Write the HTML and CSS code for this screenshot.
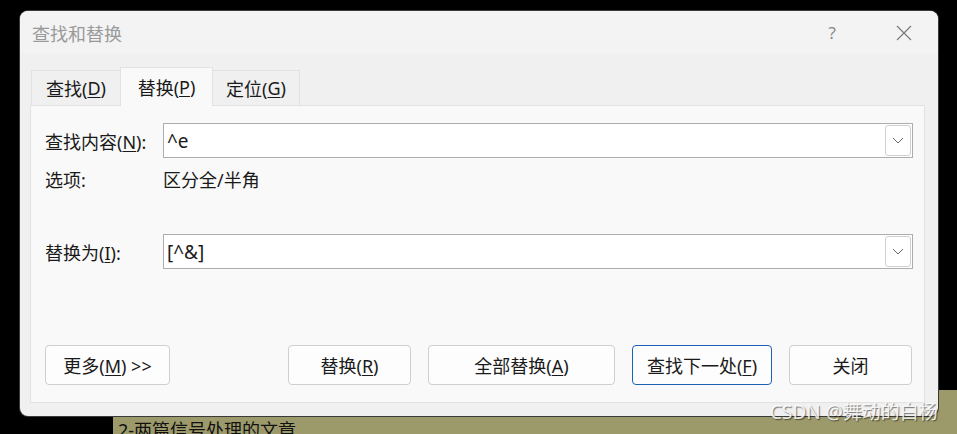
FILE: index.html
```html
<!DOCTYPE html>
<html>
<head>
    <title>查找和替换</title>
    <link rel="stylesheet" href="styles.css">
</head>
<body>
    <div class="doc">
        <p class="doc-line">2-两篇信号处理的文章</p>
    </div>

    <div class="dialog">
        <div class="title-bar">
            <span class="title">查找和替换</span>
            <span class="help">?</span>
            <svg class="close" width="16" height="16" viewBox="0 0 16 16">
                <path d="M1 1 L15 15 M15 1 L1 15" stroke="#7a7a7a" stroke-width="1.2" fill="none"/>
            </svg>
        </div>

        <div class="dialog-body">
            <div class="tabs">
                <div class="tab tab-find">查找(<u>D</u>)</div>
                <div class="tab tab-replace active">替换(<u>P</u>)</div>
                <div class="tab tab-goto">定位(<u>G</u>)</div>
            </div>

            <div class="panel">
                <div class="row">
                    <label class="label">查找内容(<u>N</u>):</label>
                    <div class="combo">
                        <span class="combo-text">^e</span>
                        <span class="combo-btn">
                            <svg width="12" height="7" viewBox="0 0 12 7">
                                <path d="M1 1 L6 6 L11 1" stroke="#6a6a6a" stroke-width="1" fill="none"/>
                            </svg>
                        </span>
                    </div>
                </div>

                <div class="row options">
                    <span class="label">选项:</span>
                    <span class="option-value">区分全/半角</span>
                </div>

                <div class="row replace-row">
                    <label class="label">替换为(<u>I</u>):</label>
                    <div class="combo">
                        <span class="combo-text">[^&amp;]</span>
                        <span class="combo-btn">
                            <svg width="12" height="7" viewBox="0 0 12 7">
                                <path d="M1 1 L6 6 L11 1" stroke="#6a6a6a" stroke-width="1" fill="none"/>
                            </svg>
                        </span>
                    </div>
                </div>

                <div class="buttons">
                    <button class="btn btn-more">更多(<u>M</u>) &gt;&gt;</button>
                    <div class="spacer"></div>
                    <button class="btn btn-replace">替换(<u>R</u>)</button>
                    <button class="btn btn-all">全部替换(<u>A</u>)</button>
                    <button class="btn btn-next default">查找下一处(<u>F</u>)</button>
                    <button class="btn btn-close">关闭</button>
                </div>
            </div>
        </div>
    </div>

    <div class="watermark">CSDN @舞动的白杨</div>
</body>
</html>
```

FILE: styles.css
```css
body {
    margin: 0;
    width: 957px;
    height: 434px;
    overflow: hidden;
    position: relative;
    background-color: #000;
    font-family: "Noto Sans", "Noto Sans CJK SC", sans-serif;
    font-size: 18px;
    color: #1a1a1a;
}

u {
    text-decoration: underline;
    text-underline-offset: 2px;
}

/* document behind the dialog */
.doc {
    position: absolute;
    left: 113px;
    top: 390px;
    right: 0;
    bottom: 0;
    background-color: #9c9a6b;
}

.doc-line {
    margin: 0;
    position: absolute;
    left: 5px;
    top: 28px;
    font-size: 18px;
    line-height: 24px;
    color: #111;
}

.dialog {
    position: absolute;
    left: 20px;
    top: 11px;
    width: 918px;
    height: 405px;
    background-color: #f0f0f0;
    border-radius: 8px;
    overflow: hidden;
    box-shadow: 0 0 0 1px #3a3a3a;
}

.title-bar {
    height: 43px;
    background-color: #f3f3f3;
    display: flex;
    align-items: center;
    padding: 0 26px 0 12px;
}

.title {
    flex: 1;
    font-size: 18px;
    color: #9a9a9a;
}

.help {
    font-size: 17px;
    color: #8a8a8a;
    margin-right: 60px;
}

.close {
    display: block;
}

.dialog-body {
    padding: 13px 13px 13px 10px;
}

.tabs {
    display: flex;
    align-items: flex-end;
    height: 38px;
    padding-left: 1px;
}

.tab {
    height: 35px;
    box-sizing: border-box;
    border: 1px solid #e2e2e2;
    border-bottom: none;
    background-color: #f0f0f0;
    display: flex;
    align-items: center;
    justify-content: center;
    font-size: 18px;
}

.tab-find {
    width: 89px;
    border-right: none;
}

.tab-replace {
    width: 93px;
}

.tab-goto {
    width: 87px;
    border-left: none;
}

.tab.active {
    background-color: #f9f9f9;
    position: relative;
    margin-bottom: -1px;
    height: 39px;
    padding-bottom: 1px;
}

.panel {
    height: 298px;
    box-sizing: border-box;
    background-color: #f9f9f9;
    border: 1px solid #e2e2e2;
    padding: 17px 11px 17px 14px;
    display: flex;
    flex-direction: column;
}

.row {
    display: flex;
    align-items: center;
}

.label {
    width: 118px;
    font-size: 18px;
}

.combo {
    flex: 1;
    height: 35px;
    box-sizing: border-box;
    border: 1px solid #adadad;
    background-color: #fff;
    display: flex;
    align-items: center;
    padding: 0 1px 0 3px;
}

.combo-text {
    flex: 1;
    font-size: 19px;
}

.combo-btn {
    width: 26px;
    height: 31px;
    box-sizing: border-box;
    border: 1px solid #d0d0d0;
    border-radius: 3px;
    display: flex;
    align-items: center;
    justify-content: center;
}

.combo-btn svg {
    display: block;
}

.options {
    height: 24px;
    margin-top: 9px;
}

.option-value {
    font-size: 18px;
}

.replace-row {
    margin-top: 43px;
}

.buttons {
    display: flex;
    gap: 17px;
    margin-top: auto;
    padding-right: 1px;
}

.spacer {
    flex: 1;
}

.btn {
    height: 40px;
    box-sizing: border-box;
    border: 1px solid #cfcfcf;
    border-radius: 4px;
    background-color: #fdfdfd;
    font-family: inherit;
    font-size: 18px;
    color: #1a1a1a;
    padding: 0;
}

.btn-more {
    width: 125px;
}

.btn-replace {
    width: 123px;
}

.btn-all {
    width: 187px;
}

.btn-next {
    width: 140px;
}

.btn-close {
    width: 123px;
}

.btn.default {
    border-color: #1a62b4;
}

.watermark {
    position: absolute;
    left: 770px;
    top: 399px;
    font-size: 19px;
    line-height: 26px;
    color: rgba(255, 255, 255, 0.85);
    text-shadow: 1px 1px 1px rgba(0, 0, 0, 0.5);
}
```
